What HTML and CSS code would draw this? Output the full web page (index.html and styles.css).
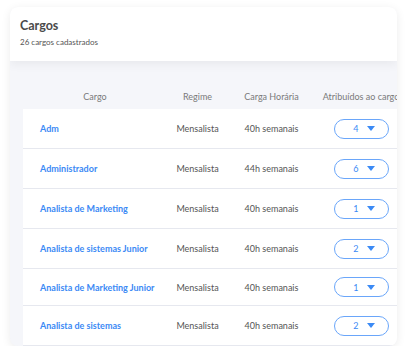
FILE: index.html
```html
<!DOCTYPE html>
<html lang="pt-BR">
<head>
    <meta charset="UTF-8">
    <title>Cargos</title>
    <link rel="stylesheet" href="styles.css">
</head>
<body>
    <div class="card">
        <header class="card-header">
            <h1>Cargos</h1>
            <p class="subtitle">26 cargos cadastrados</p>
        </header>

        <section class="card-body">
            <div class="table">
                <div class="row head">
                    <div class="col col-cargo">Cargo</div>
                    <div class="col">Regime</div>
                    <div class="col">Carga Horária</div>
                    <div class="col">Atribuídos ao cargo</div>
                </div>

                <div class="row item">
                    <div class="col col-cargo"><a href="#">Adm</a></div>
                    <div class="col">Mensalista</div>
                    <div class="col">40h semanais</div>
                    <div class="col"><button class="pill">4 <span class="caret"></span></button></div>
                </div>
                <div class="row item">
                    <div class="col col-cargo"><a href="#">Administrador</a></div>
                    <div class="col">Mensalista</div>
                    <div class="col">44h semanais</div>
                    <div class="col"><button class="pill">6 <span class="caret"></span></button></div>
                </div>
                <div class="row item">
                    <div class="col col-cargo"><a href="#">Analista de Marketing</a></div>
                    <div class="col">Mensalista</div>
                    <div class="col">40h semanais</div>
                    <div class="col"><button class="pill">1 <span class="caret"></span></button></div>
                </div>
                <div class="row item">
                    <div class="col col-cargo"><a href="#">Analista de sistemas Junior</a></div>
                    <div class="col">Mensalista</div>
                    <div class="col">40h semanais</div>
                    <div class="col"><button class="pill">2 <span class="caret"></span></button></div>
                </div>
                <div class="row item short">
                    <div class="col col-cargo"><a href="#">Analista de Marketing Junior</a></div>
                    <div class="col">Mensalista</div>
                    <div class="col">40h semanais</div>
                    <div class="col"><button class="pill">1 <span class="caret"></span></button></div>
                </div>
                <div class="row item">
                    <div class="col col-cargo"><a href="#">Analista de sistemas</a></div>
                    <div class="col">Mensalista</div>
                    <div class="col">40h semanais</div>
                    <div class="col"><button class="pill">2 <span class="caret"></span></button></div>
                </div>
            </div>
        </section>
    </div>
</body>
</html>
```

FILE: styles.css
```css
:root {
    --link-color: #3b8af5;
    --text-color: #555;
    --muted-color: #7a7a7a;
    --body-bg: #f5f6fa;
    --line-color: #e6e8ef;
}

* {
    margin: 0;
    padding: 0;
    box-sizing: border-box;
}

body {
    font-family: 'Lato', 'Open Sans', sans-serif;
    background-color: #fff;
    color: var(--text-color);
    padding: 7px 10px 0 10px;
}

.card {
    width: 387px;
    height: 339px;
    border-radius: 8px;
    overflow: hidden;
    background-color: var(--body-bg);
    box-shadow: 0 2px 10px rgba(0, 0, 0, 0.08);
    display: flex;
    flex-direction: column;
}

.card-header {
    background-color: #fff;
    height: 58px;
    padding: 11px 10px 0 10px;
    box-shadow: 0 3px 10px rgba(0, 0, 0, 0.06);
    position: relative;
    z-index: 1;
}

.card-header h1 {
    font-size: 12.5px;
    font-weight: 700;
    color: #4a4a4a;
    line-height: 16px;
}

.subtitle {
    font-size: 8px;
    color: #555;
    margin-top: 3px;
}

.card-body {
    flex: 1;
    padding: 26px 0 0 13px;
}

.table {
    width: 384px;
}

.row {
    display: grid;
    grid-template-columns: 144px 61px 87px 92px;
    align-items: center;
}

.col {
    text-align: center;
    font-size: 9px;
    white-space: nowrap;
}

.head {
    height: 22px;
    padding-top: 4px;
    color: var(--muted-color);
    font-size: 9px;
    align-items: start;
}

.item {
    height: 40px;
    background-color: #fff;
    border-bottom: 1px solid var(--line-color);
    color: var(--text-color);
}

.item.short {
    height: 37px;
}

.item .col-cargo {
    text-align: left;
    padding-left: 17px;
}

.col-cargo a {
    color: var(--link-color);
    text-decoration: none;
    font-weight: 700;
}

.pill {
    display: inline-flex;
    align-items: center;
    justify-content: flex-end;
    gap: 8px;
    width: 55px;
    height: 20px;
    padding-right: 13px;
    border: 1px solid #6aa6fa;
    border-radius: 10px;
    background-color: #fff;
    color: var(--link-color);
    font-family: inherit;
    font-size: 9px;
}

.caret {
    width: 0;
    height: 0;
    border-left: 4.5px solid transparent;
    border-right: 4.5px solid transparent;
    border-top: 5px solid var(--link-color);
}
```
